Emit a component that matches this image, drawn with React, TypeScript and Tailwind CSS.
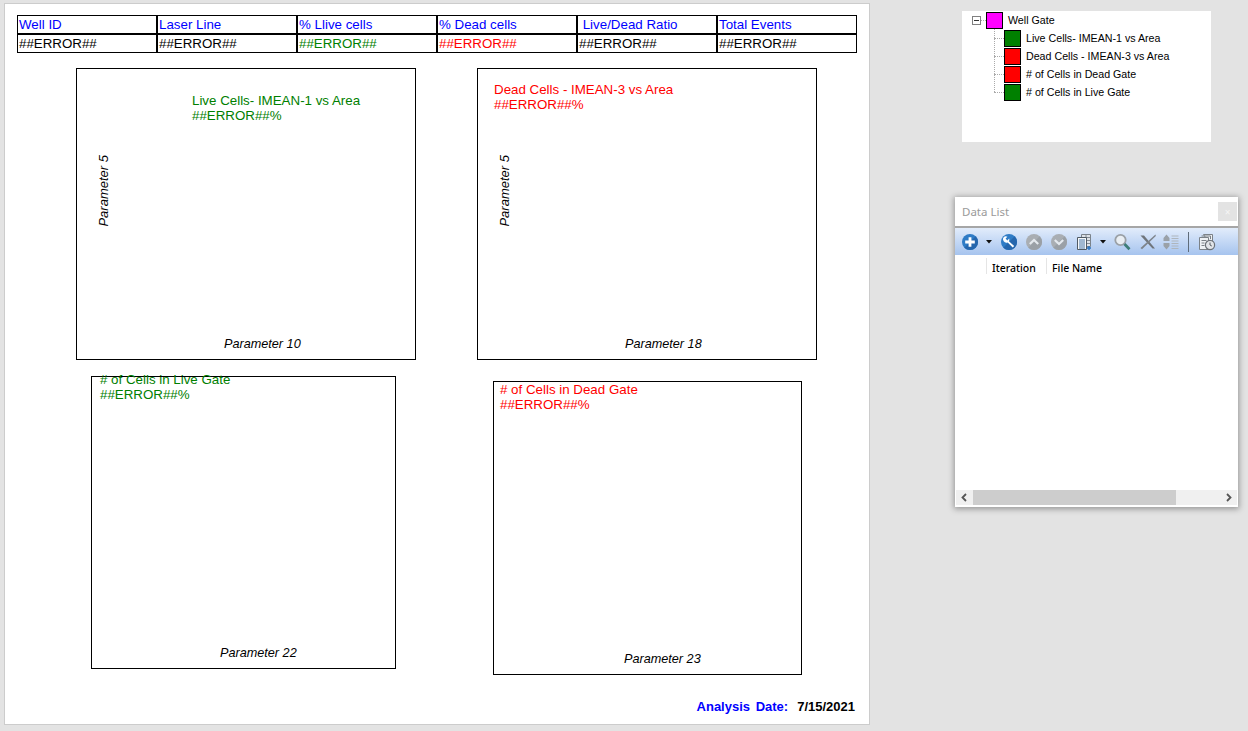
const sans = "font-['Liberation_Sans',Arial,sans-serif]";

const columns = [
  { head: "Well ID", color: "text-[#000000]" },
  { head: "Laser Line", color: "text-[#000000]" },
  { head: "% Llive cells", color: "text-[#008000]" },
  { head: "% Dead cells", color: "text-[#ff0000]" },
  { head: "\u00a0Live/Dead Ratio", color: "text-[#000000]" },
  { head: "Total Events", color: "text-[#000000]" },
];

function Plot(props: {
  box: string;
  titleBox: string;
  title: string;
  color: string;
  xLabel: string;
  xBox: string;
  yBox?: string;
}) {
  return (
    <div className={`relative shrink-0 border border-black bg-white ${props.box}`}>
      <div className={`text-[13.33px] leading-[15px] ${props.titleBox} ${props.color}`}>
        <div className="whitespace-nowrap">{props.title}</div>
        <div>##ERROR##%</div>
      </div>
      {props.yBox && (
        <div className={`absolute whitespace-nowrap text-[13px] italic leading-[14px] text-black [writing-mode:vertical-rl] rotate-180 ${props.yBox}`}>
          Parameter 5
        </div>
      )}
      <div className={`absolute whitespace-nowrap text-[12.67px] italic leading-[14px] text-black ${props.xBox}`}>
        {props.xLabel}
      </div>
    </div>
  );
}

function Report() {
  return (
    <div className={`h-[722px] w-[866px] shrink-0 border border-[#cccccc] bg-white ${sans}`}>
      <div className="ml-[12px] mt-[11px] grid w-[840px] grid-cols-6">
        {columns.map((c) => (
          <div key={c.head} className="h-[19px] border border-black pl-px text-[13.33px] leading-[18px] text-[#0000ff]">
            {c.head}
          </div>
        ))}
        {columns.map((c) => (
          <div key={c.head} className={`h-[19px] border border-black pl-px text-[13.33px] leading-[17px] ${c.color}`}>
            ##ERROR##
          </div>
        ))}
      </div>

      <div className="ml-[71px] mt-[15px] flex gap-[61px]">
        <Plot
          box="h-[292px] w-[340px]"
          titleBox="pl-[115px] pt-[24px]"
          title="Live Cells- IMEAN-1 vs Area"
          color="text-[#008000]"
          xLabel="Parameter 10"
          xBox="left-[147px] top-[268px]"
          yBox="left-[20px] top-[86px]"
        />
        <Plot
          box="h-[292px] w-[340px]"
          titleBox="pl-[16px] pt-[13px]"
          title="Dead Cells - IMEAN-3 vs Area"
          color="text-[#ff0000]"
          xLabel="Parameter 18"
          xBox="left-[147px] top-[268px]"
          yBox="left-[20px] top-[86px]"
        />
      </div>

      <div className="ml-[86px] mt-[16px] flex items-start gap-[97px]">
        <Plot
          box="h-[293px] w-[305px]"
          titleBox="-mt-[5px] pl-[8px]"
          title="# of Cells in Live Gate"
          color="text-[#008000]"
          xLabel="Parameter 22"
          xBox="left-[128px] top-[269px]"
        />
        <div className="mt-[5px]">
          <Plot
            box="h-[294px] w-[309px]"
            titleBox="pl-[6px]"
            title="# of Cells in Dead Gate"
            color="text-[#ff0000]"
            xLabel="Parameter 23"
            xBox="left-[130px] top-[270px]"
          />
        </div>
      </div>

      <div className="mt-[24px] flex justify-end gap-[9px] pr-[14px] text-[13px] font-bold leading-[16px]">
        <span className="text-[#0000ff] [word-spacing:2px]">Analysis Date:</span>
        <span className="text-black">7/15/2021</span>
      </div>
    </div>
  );
}

const treeItems = [
  { name: "Live Cells- IMEAN-1 vs Area", color: "bg-[#008000]" },
  { name: "Dead Cells - IMEAN-3 vs Area", color: "bg-[#ff0000]" },
  { name: "# of Cells in Dead Gate", color: "bg-[#ff0000]" },
  { name: "# of Cells in Live Gate", color: "bg-[#008000]" },
];

function GateTree() {
  return (
    <div className={`absolute left-[962px] top-[11px] h-[131px] w-[249px] bg-white text-[10.67px] leading-[13px] text-black ${sans}`}>
      <div className="flex h-[18px] items-center pl-[10px] pt-px">
        <div className="flex h-[9px] w-[9px] items-center justify-center border border-[#808080] bg-white">
          <div className="h-px w-[5px] bg-[#333333]" />
        </div>
        <div className="w-[5px] border-t border-dotted border-[#aaaaaa]" />
        <div className="h-[17px] w-[17px] border border-black bg-[#ff00ff]" />
        <span className="ml-[5px]">Well Gate</span>
      </div>
      <div className="relative pl-[32px]">
        <div className="absolute left-[32px] top-0 h-[63px] border-l border-dotted border-[#aaaaaa]" />
        {treeItems.map((item) => (
          <div key={item.name} className="flex h-[18px] items-center">
            <div className="w-[10px] border-t border-dotted border-[#aaaaaa]" />
            <div className={`h-[17px] w-[17px] shrink-0 border border-black ${item.color}`} />
            <span className="ml-[5px] whitespace-nowrap">{item.name}</span>
          </div>
        ))}
      </div>
    </div>
  );
}

function RoundIcon({ light, dark, children }: { light: string; dark: string; children: React.ReactNode }) {
  return (
    <svg width="18" height="18" viewBox="0 0 18 18" className="shrink-0">
      <circle cx="9" cy="9" r="8" fill={light} />
      <path d="M3.3 14.7A8 8 0 0 0 14.7 3.3z" fill={dark} />
      {children}
    </svg>
  );
}

function DropArrow({ className }: { className: string }) {
  return (
    <svg width="6" height="4" viewBox="0 0 6 4" className={`shrink-0 ${className}`}>
      <path d="M0 0h6L3 3.5z" fill="#111111" />
    </svg>
  );
}

function Toolbar() {
  return (
    <div className="flex h-[29px] shrink-0 items-center border-t-2 border-[#a6a6a6] bg-gradient-to-b from-[#e2ecfb] to-[#a6c4ee] pl-[6px]">
      <RoundIcon light="#2f7cc6" dark="#2566ad">
        <path d="M9 4.2v9.6M4.2 9h9.6" stroke="#ffffff" strokeWidth="2.8" />
      </RoundIcon>
      <DropArrow className="ml-[7px] mt-px" />
      <div className="ml-[8px]">
        <RoundIcon light="#2f7cc6" dark="#2566ad">
          <path d="M4.5 3.6a3.4 3.4 0 0 1 2.9.2L5.6 5.6l1.7 1.8 1.9-1.9a3.4 3.4 0 0 1-.3 2.7l5.3 4.7-1.5 1.6-5-5.1a3.4 3.4 0 0 1-4-1.1 3.4 3.4 0 0 1 .9-4.7z" fill="#ffffff" />
        </RoundIcon>
      </div>
      <div className="ml-[7px]">
        <RoundIcon light="#a9aeb3" dark="#9aa0a6">
          <path d="M4.8 11l4.2-4 4.2 4" fill="none" stroke="#e4e9ee" strokeWidth="2.2" />
        </RoundIcon>
      </div>
      <div className="ml-[7px]">
        <RoundIcon light="#a9aeb3" dark="#9aa0a6">
          <path d="M4.8 7l4.2 4 4.2-4" fill="none" stroke="#e4e9ee" strokeWidth="2.2" />
        </RoundIcon>
      </div>
      <svg width="18" height="18" viewBox="0 0 18 18" className="ml-[7px] shrink-0">
        <path d="M6.5 1.5h9v12h-9z" fill="#dfe3e8" stroke="#7b838b" />
        <path d="M6.5 4.5h9M6.5 7.5h9M6.5 10.5h9M11 1.5v12" stroke="#7b838b" strokeWidth="0.9" />
        <path d="M2.5 4.5h9v12h-9z" fill="#f6f8fa" stroke="#4f5a64" />
        <path d="M4 7h6M4 9h6M4 11h6M4 13h6M4 15h6" stroke="#4a78a8" strokeWidth="1" />
        <path d="M14 13v4M12 15h4" stroke="#2c73bd" strokeWidth="1.4" />
      </svg>
      <DropArrow className="ml-[7px] mt-px" />
      <svg width="18" height="18" viewBox="0 0 18 18" className="ml-[7px] shrink-0">
        <circle cx="7.5" cy="7" r="5.2" fill="#e9eef3" stroke="#9aa0a6" strokeWidth="1.8" />
        <path d="M11.5 11l5 5.2" stroke="#3d7d78" strokeWidth="2.8" />
      </svg>
      <svg width="18" height="18" viewBox="0 0 18 18" className="ml-[8px] shrink-0">
        <path d="M1.5 2.5h3.5L16 15.5h-2.5z" fill="#6f757b" />
        <path d="M16.5 1.5L1.5 15l1.5 1.2L16.8 3z" fill="#7d8389" />
      </svg>
      <svg width="18" height="18" viewBox="0 0 18 18" className="ml-[5px] shrink-0">
        <path d="M4.5 1.5L7.5 5v3h-6V5zM4.5 16.5L7.5 13v-3h-6v3z" fill="#9aa1a8" />
        <path d="M9.5 3h7M9.5 5.5h7M9.5 8h7M9.5 10.5h7M9.5 13h7M9.5 15.5h7" stroke="#aeb5bc" strokeWidth="1" />
      </svg>
      <div className="ml-[8px] h-[20px] w-px bg-[#5f6c7a]" />
      <svg width="18" height="18" viewBox="0 0 18 18" className="ml-[9px] shrink-0">
        <path d="M5.5 1.5h9v9h-3zM3.5 3h9v3" fill="#eef1f4" stroke="#7b8187" />
        <path d="M1.5 4.5h9v12h-9z" fill="#eef1f4" stroke="#7b8187" />
        <path d="M3.5 7.5h5M3.5 10h3M3.5 12.5h3" stroke="#7b8187" />
        <circle cx="12" cy="12" r="4.6" fill="#e1e4e8" stroke="#6b7177" strokeWidth="1.2" />
        <path d="M12 9.5V12l1.8 1" fill="none" stroke="#555b61" />
      </svg>
    </div>
  );
}

function DataList() {
  return (
    <div className="absolute left-[955px] top-[197px] flex h-[310px] w-[283px] flex-col bg-white shadow-[0_1px_6px_1px_rgba(0,0,0,0.35)] font-['Noto_Sans',sans-serif]">
      <div className="flex h-[29px] shrink-0 items-center justify-between pl-[7px] pr-px">
        <span className="text-[11.5px] text-[#9a9a9a]">Data List</span>
        <div className="flex h-[19px] w-[19px] items-center justify-center bg-[#e3e3e3] text-[10px] leading-none text-[#f5f5f5]">
          ×
        </div>
      </div>
      <Toolbar />
      <div className="flex h-[22px] shrink-0 text-[10.5px] font-medium leading-[22px] text-black">
        <div className="w-[31px]" />
        <div className="my-[3px] w-px bg-[#e5e5e5]" />
        <div className="w-[59px] pl-[5px] pt-[2px]">Iteration</div>
        <div className="my-[3px] w-px bg-[#e5e5e5]" />
        <div className="pl-[5px] pt-[2px]">File Name</div>
      </div>
      <div className="flex-1" />
      <div className="mx-px mb-[2px] flex h-[15px] shrink-0 items-center bg-[#f0f0f0]">
        <svg width="17" height="15" viewBox="0 0 17 15" className="shrink-0">
          <path d="M10 4L6.5 7.5 10 11" fill="none" stroke="#555555" strokeWidth="1.8" />
        </svg>
        <div className="h-full w-[203px] bg-[#cdcdcd]" />
        <div className="flex-1" />
        <svg width="17" height="15" viewBox="0 0 17 15" className="shrink-0">
          <path d="M7 4l3.5 3.5L7 11" fill="none" stroke="#555555" strokeWidth="1.8" />
        </svg>
      </div>
    </div>
  );
}

export default function App() {
  return (
    <div className="relative h-[731px] w-[1248px] overflow-hidden bg-[#e3e3e3] pl-[4px] pt-[3px]">
      <Report />
      <GateTree />
      <DataList />
    </div>
  );
}
